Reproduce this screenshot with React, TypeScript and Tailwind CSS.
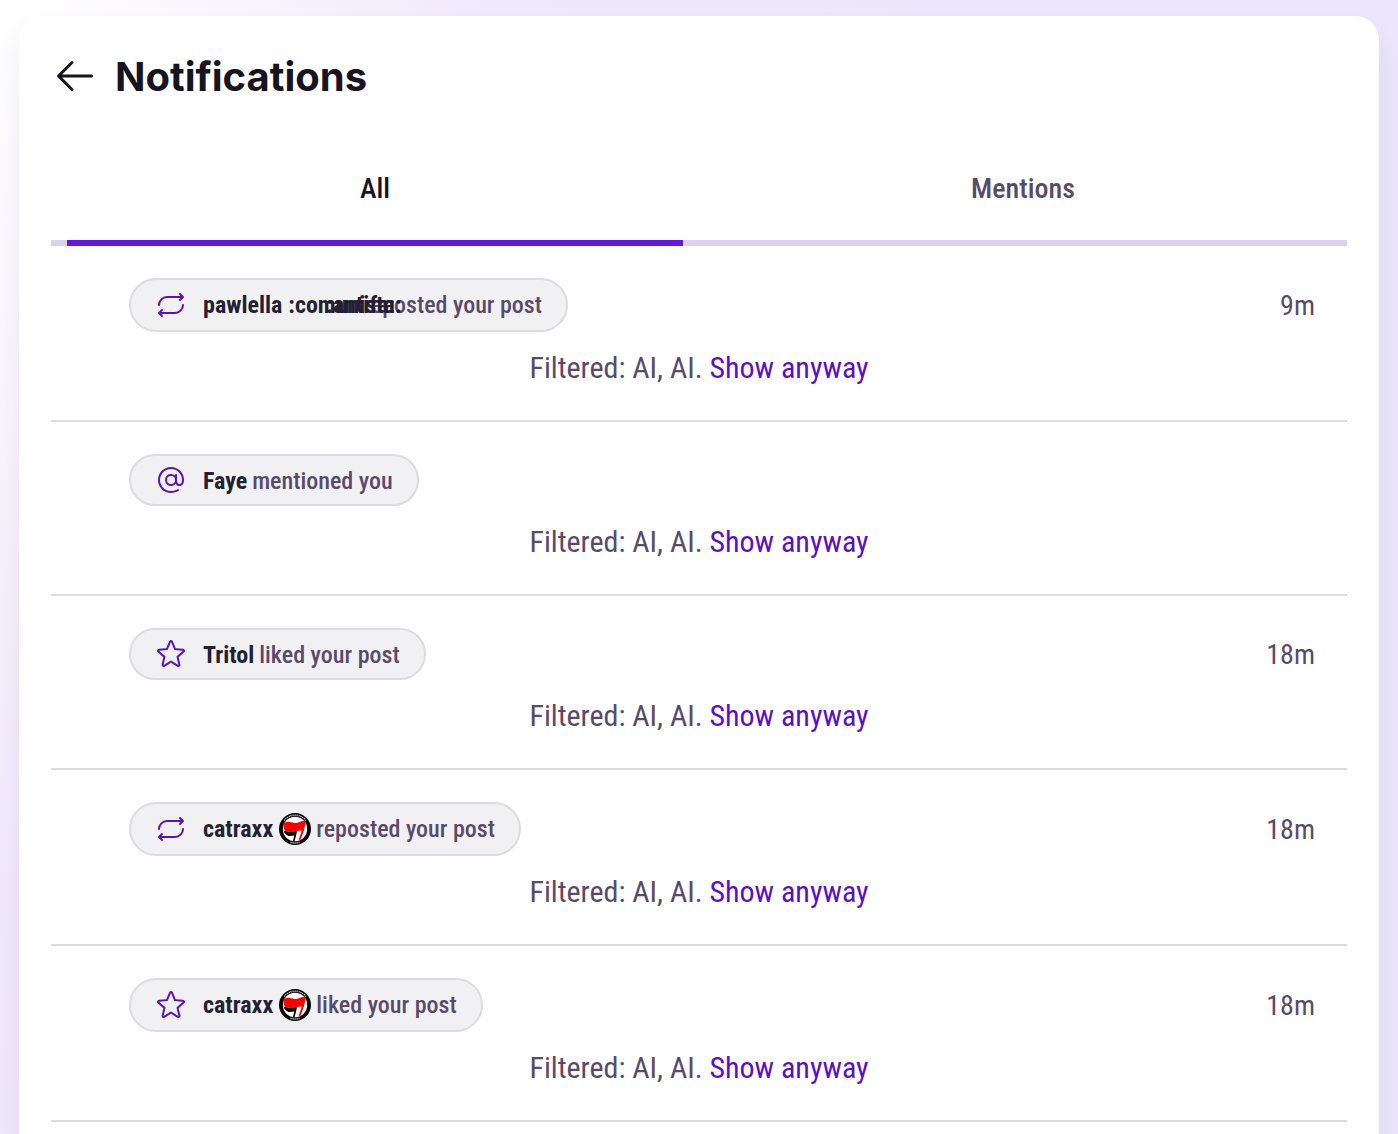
import { useState } from "react";
import { PiArrowLeft, PiAt, PiRepeat, PiStar } from "react-icons/pi";
import clsx from "clsx";

type Kind = "repost" | "mention" | "like";

interface Notification {
  id: number;
  kind: Kind;
  name: string;
  emojis?: string[];
  time?: string;
}

const notifications: Notification[] = [
  { id: 1, kind: "repost", name: "pawlella", emojis: [":comunista:", ":antifa:"], time: "9m" },
  { id: 2, kind: "mention", name: "Faye" },
  { id: 3, kind: "like", name: "Tritol", time: "18m" },
  { id: 4, kind: "repost", name: "catraxx", emojis: ["flags"], time: "18m" },
  { id: 5, kind: "like", name: "catraxx", emojis: ["flags"], time: "18m" },
];

const icons = { repost: PiRepeat, mention: PiAt, like: PiStar };

const labels = {
  repost: "reposted your post",
  mention: "mentioned you",
  like: "liked your post",
};

function FlagsEmoji() {
  return (
    <svg viewBox="0 0 32 32" className="size-8" aria-hidden="true">
      <circle cx="16" cy="16" r="16" fill="#000" />
      {/* lettering on the ring */}
      <path d="M5 7.500A14 14 0 0 1 27 7.500" fill="none" stroke="#bbb" strokeWidth="1.500" strokeDasharray="1.300 0.700" />
      <path d="M11.500 29.300A14 14 0 0 0 20.500 29.300" fill="none" stroke="#bbb" strokeWidth="1.500" strokeDasharray="1.300 0.700" />
      <circle cx="16" cy="16" r="12.200" fill="#fff" />
      <path d="M4.500 17.500c2.500-.3 4.500 1.700 7 1.200 2-.4 3.500-1 6.500-.2l-2.300 9.500-1.700-.1 1.300-5.300c-2-.2-3.500.8-5.500.3C7.500 22.300 5.500 21 4.500 17.500Z" fill="#000" />
      <path d="M4.500 10.500c2-1.800 5-2.300 8-1.200 3.500 1.200 6 .6 8.500-.6 2-.9 4-.8 6 0l-2.200 9.300-3.600 9.300-1.700.3 3.200-9.900c-3-1-4.700.8-7.200 1.400-3 .7-5-.9-7.700-.7-2.300.1-3.600-3.800-3.300-7.900Z" fill="#f00" />
    </svg>
  );
}

function Emoji({ code }: { code: string }) {
  return (
    <span className="flex size-8 shrink-0 items-center whitespace-nowrap">
      {code === "flags" ? <FlagsEmoji /> : code}
    </span>
  );
}

function NotificationRow({ item }: { item: Notification }) {
  const Icon = icons[item.kind];

  return (
    <li className="border-b-2 border-[#dcdce0] pt-8 pb-8">
      <div className="flex items-center justify-between pr-8 pl-[78px]">
        <div
          className={clsx(
            "flex items-center rounded-full border-2 border-[#dcdce0] bg-[#f1f1f4] px-6 text-2xl",
            item.emojis ? "h-[54px]" : "h-[52px]"
          )}
        >
          <Icon className="mr-4 size-8 text-[#5b0fc7]" />
          <span className={clsx("flex items-center gap-[5px]", !item.emojis && "pt-0.5")}>
            <b className="z-10 flex items-center gap-[6px] font-bold text-[#241f31]">
              {item.name}
              {item.emojis?.map((code) => <Emoji key={code} code={code} />)}
            </b>
            <span className="font-medium text-[#594a6b]">{labels[item.kind]}</span>
          </span>
        </div>
        {item.time && <time className="pt-0.5 text-[28px] text-[#594a6b]">{item.time}</time>}
      </div>
      <p className="mt-4 text-center text-[30px] leading-10 text-[#594a6b]">
        Filtered: AI, AI.{" "}
        <button className="text-[#5b0fc7]">Show anyway</button>
      </p>
    </li>
  );
}

export default function App() {
  const [tab, setTab] = useState("All");

  return (
    <div className="h-screen overflow-hidden bg-[radial-gradient(ellipse_500px_900px_at_0_0,#ffffff,#f9f5fd_45%,#f0e8fc_100%,#ebe6fb_200%)] px-[19px] pt-4 font-['Roboto_Condensed','Roboto',sans-serif]">
      <main className="min-h-screen rounded-t-3xl bg-white px-8 pt-8 shadow-[0_16px_24px_rgba(60,40,90,0.08)]">
        <header className="flex h-14 items-center gap-4">
          <button aria-label="Back" className="text-[#17131f]">
            <PiArrowLeft className="size-12" />
          </button>
          <h1 className="pt-0.5 font-['Inter',sans-serif] text-[40px] font-bold text-[#17131f]">Notifications</h1>
        </header>
        <div className="mt-8 flex h-[110px] border-b-[6px] border-[#dcd2ee]" role="tablist">
          {["All", "Mentions"].map((name) => (
            <button
              key={name}
              role="tab"
              aria-selected={tab === name}
              onClick={() => setTab(name)}
              className={clsx(
                "relative flex-1 pt-0.5 text-[28px] font-medium",
                tab === name ? "text-[#17131f]" : "text-[#594a6b]"
              )}
            >
              {name}
              {tab === name && <span className="absolute inset-x-4 -bottom-[6px] h-[6px] bg-[#6318e0]" />}
            </button>
          ))}
        </div>
        <ul>
          {notifications.map((item) => (
            <NotificationRow key={item.id} item={item} />
          ))}
        </ul>
      </main>
    </div>
  );
}
